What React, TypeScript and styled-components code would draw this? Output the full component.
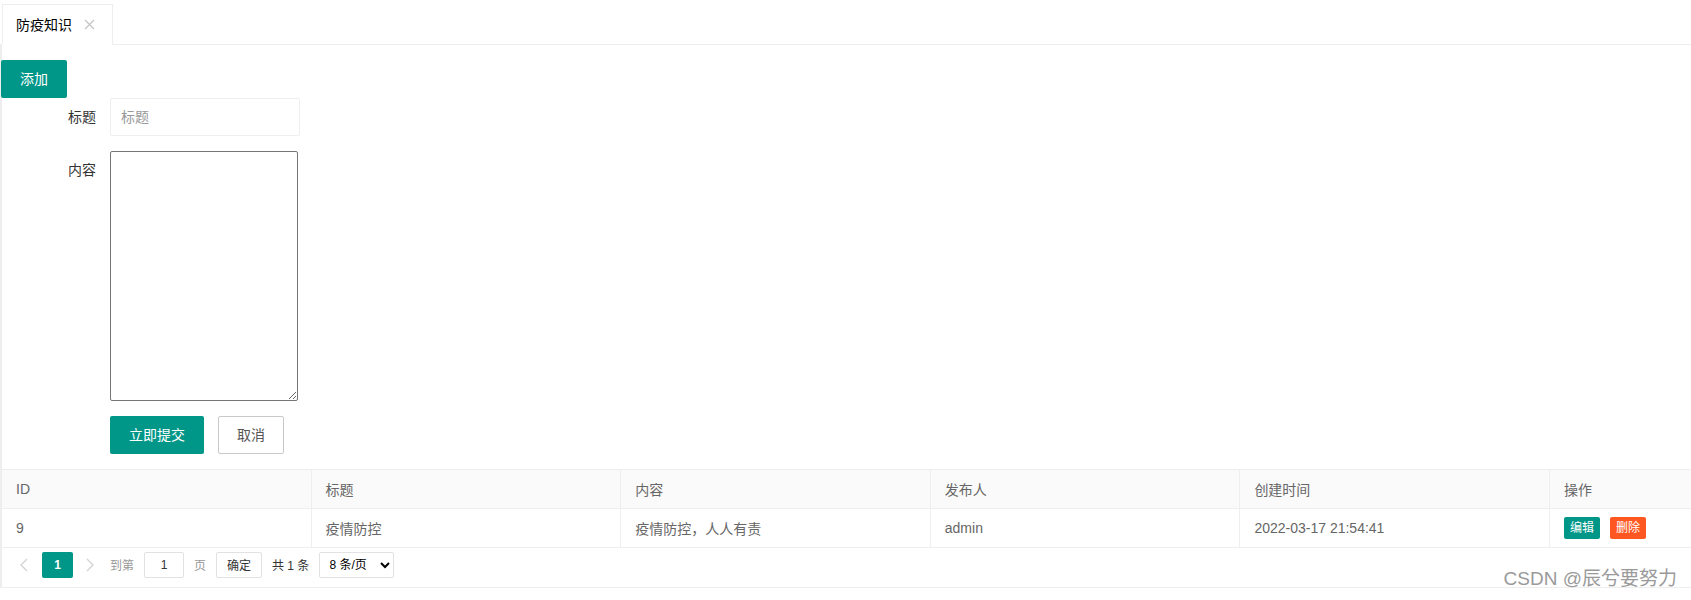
import React from 'react';
import styled, { createGlobalStyle, css } from 'styled-components';

const GlobalStyle = createGlobalStyle`
    * {
        box-sizing: border-box;
    }
    body {
        margin: 0;
        background: #fff;
        color: #333;
        font-family: 'Liberation Sans', 'Noto Sans CJK SC', sans-serif;
        font-size: 14px;
    }
`;

const Page = styled.div`
    position: relative;
    width: 100%;
    min-height: 600px;
    overflow: hidden;
`;

const TabBar = styled.div`
    display: flex;
    height: 45px;
    padding: 4px 0 0 2px;
    border-bottom: 1px solid #eee;
`;

const Tab = styled.div`
    display: flex;
    align-items: center;
    height: 41px;
    margin-bottom: -1px;
    padding: 0 13px;
    border: 1px solid #eee;
    border-bottom: 1px solid #fff;
    background: #fff;
    color: #000;
    font-size: 14px;
    line-height: 20px;
`;

const CloseIcon = styled.span`
    display: inline-flex;
    margin-left: 12px;
    margin-right: 4px;
    width: 11px;
    height: 11px;
`;

const Main = styled.div`
    display: flex;
    flex-direction: column;
    align-items: flex-start;
    padding-top: 15px;
    border-left: 2px solid #eeeeee;
`;

const Btn = styled.button<{ $variant?: 'normal' | 'primary'; $size?: 'md' | 'xs'; $danger?: boolean }>`
    display: inline-flex;
    align-items: center;
    justify-content: center;
    height: 38px;
    padding: 0 18px;
    border: 1px solid transparent;
    border-radius: 2px;
    background: #009688;
    color: #fff;
    font-family: inherit;
    font-size: 14px;
    line-height: 20px;
    cursor: pointer;
    ${(p) =>
        p.$variant === 'primary' &&
        css`
            background: #fff;
            border-color: #c9c9c9;
            color: #555;
        `}
    ${(p) =>
        p.$size === 'xs' &&
        css`
            height: 22px;
            padding: 0 5px;
            font-size: 12px;
        `}
    ${(p) =>
        p.$danger &&
        css`
            background: #ff5722;
        `}
`;

const AddButton = styled(Btn)`
    margin-left: -1px;
    width: 66px;
`;

const Form = styled.div`
    display: flex;
    flex-direction: column;
    gap: 15px;
`;

const FormItem = styled.div`
    display: flex;
    align-items: flex-start;
`;

const Label = styled.label`
    width: 108px;
    padding: 9px 14px 9px 0;
    text-align: right;
    color: #333;
    font-size: 14px;
    line-height: 20px;
`;

const Input = styled.input`
    width: 190px;
    height: 38px;
    padding: 0 10px;
    border: 1px solid #eee;
    border-radius: 2px;
    font-family: inherit;
    font-size: 14px;
    color: #333;
    outline: none;
    &::placeholder {
        color: #999;
    }
`;

const TextArea = styled.textarea`
    width: 188px;
    height: 250px;
    border: 1px solid #767676;
    border-radius: 2px;
`;

const ButtonRow = styled.div`
    display: flex;
    gap: 14px;
    padding-left: 108px;
`;

const TableBox = styled.div`
    width: 100%;
    margin-top: 15px;
    border-top: 1px solid #eee;
    border-bottom: 1px solid #eee;
`;

const Row = styled.div<{ $header?: boolean }>`
    display: grid;
    grid-template-columns: repeat(5, 309.6px) 1fr;
    border-bottom: 1px solid #eee;
    background: ${(p) => (p.$header ? '#fafafa' : '#fff')};
`;

const Cell = styled.div`
    display: flex;
    align-items: center;
    gap: 10px;
    height: 38px;
    padding: 0 14px;
    border-right: 1px solid #eee;
    color: #666;
    font-size: 14px;
    white-space: nowrap;
    &:last-child {
        border-right: none;
    }
`;

const Pager = styled.div`
    display: flex;
    align-items: center;
    height: 39px;
    padding: 0 0 6px 7px;
    font-size: 12px;
`;

const PageArrow = styled.span`
    display: inline-flex;
    align-items: center;
    justify-content: center;
    width: 30px;
    height: 26px;
`;

const CurrentPage = styled.span`
    display: inline-flex;
    align-items: center;
    justify-content: center;
    width: 31px;
    height: 26px;
    margin: 0 2px 0 3px;
    border-radius: 2px;
    background: #009688;
    color: #fff;
    font-weight: bold;
    font-size: 12px;
`;

const PagerText = styled.span<{ $muted?: boolean }>`
    margin: 0 10px;
    color: ${(p) => (p.$muted ? '#999' : '#333')};
    font-size: 12px;
`;

const PagerBox = styled.span<{ $width: number }>`
    display: inline-flex;
    align-items: center;
    justify-content: center;
    width: ${(p) => p.$width}px;
    height: 26px;
    border: 1px solid #e2e2e2;
    border-radius: 2px;
    background: #fff;
    color: #333;
    font-size: 12px;
`;

const PagerSelect = styled.select`
    width: 75px;
    height: 26px;
    padding: 0 0 0 5px;
    border: 1px solid #e2e2e2;
    border-radius: 2px;
    background: #fff;
    color: #000;
    font-family: inherit;
    font-size: 12px;
`;

const Watermark = styled.div`
    position: absolute;
    right: 14px;
    top: 566px;
    color: #9a9a9a;
    font-size: 19px;
    line-height: 26px;
    pointer-events: none;
`;

const Chevron = ({ dir }: { dir: 'left' | 'right' }) => (
    <svg width="8" height="14" viewBox="0 0 8 14">
        <polyline
            points={dir === 'left' ? '7,1 1,7 7,13' : '1,1 7,7 1,13'}
            fill="none"
            stroke="#d2d2d2"
            strokeWidth="1.3"
        />
    </svg>
);

const columns = ['ID', '标题', '内容', '发布人', '创建时间', '操作'];

const rows = [
    { id: 9, title: '疫情防控', content: '疫情防控，人人有责', author: 'admin', created: '2022-03-17 21:54:41' },
];

const App = (): JSX.Element => {
    return (
        <Page>
            <GlobalStyle />
            <TabBar>
                <Tab>
                    防疫知识
                    <CloseIcon>
                        <svg width="11" height="11" viewBox="0 0 11 11">
                            <path d="M1 1L10 10M10 1L1 10" stroke="#c2c2c2" strokeWidth="1.1" />
                        </svg>
                    </CloseIcon>
                </Tab>
            </TabBar>
            <Main>
                <AddButton>添加</AddButton>
                <Form>
                    <FormItem>
                        <Label>标题</Label>
                        <Input placeholder="标题" />
                    </FormItem>
                    <FormItem>
                        <Label>内容</Label>
                        <TextArea />
                    </FormItem>
                    <ButtonRow>
                        <Btn>立即提交</Btn>
                        <Btn $variant="primary">取消</Btn>
                    </ButtonRow>
                </Form>
                <TableBox>
                    <Row $header>
                        {columns.map((c) => (
                            <Cell key={c}>{c}</Cell>
                        ))}
                    </Row>
                    {rows.map((r) => (
                        <Row key={r.id}>
                            <Cell>{r.id}</Cell>
                            <Cell>{r.title}</Cell>
                            <Cell>{r.content}</Cell>
                            <Cell>{r.author}</Cell>
                            <Cell>{r.created}</Cell>
                            <Cell>
                                <Btn $size="xs">编辑</Btn>
                                <Btn $size="xs" $danger>
                                    删除
                                </Btn>
                            </Cell>
                        </Row>
                    ))}
                    <Pager>
                        <PageArrow>
                            <Chevron dir="left" />
                        </PageArrow>
                        <CurrentPage>1</CurrentPage>
                        <PageArrow>
                            <Chevron dir="right" />
                        </PageArrow>
                        <PagerText $muted style={{ marginLeft: 5 }}>
                            到第
                        </PagerText>
                        <PagerBox $width={40}>1</PagerBox>
                        <PagerText $muted>页</PagerText>
                        <PagerBox $width={46}>确定</PagerBox>
                        <PagerText>共 1 条</PagerText>
                        <PagerSelect defaultValue="8">
                            <option value="8">8 条/页</option>
                            <option value="16">16 条/页</option>
                        </PagerSelect>
                    </Pager>
                </TableBox>
            </Main>
            <Watermark>CSDN @辰兮要努力</Watermark>
        </Page>
    );
};

export default App;
